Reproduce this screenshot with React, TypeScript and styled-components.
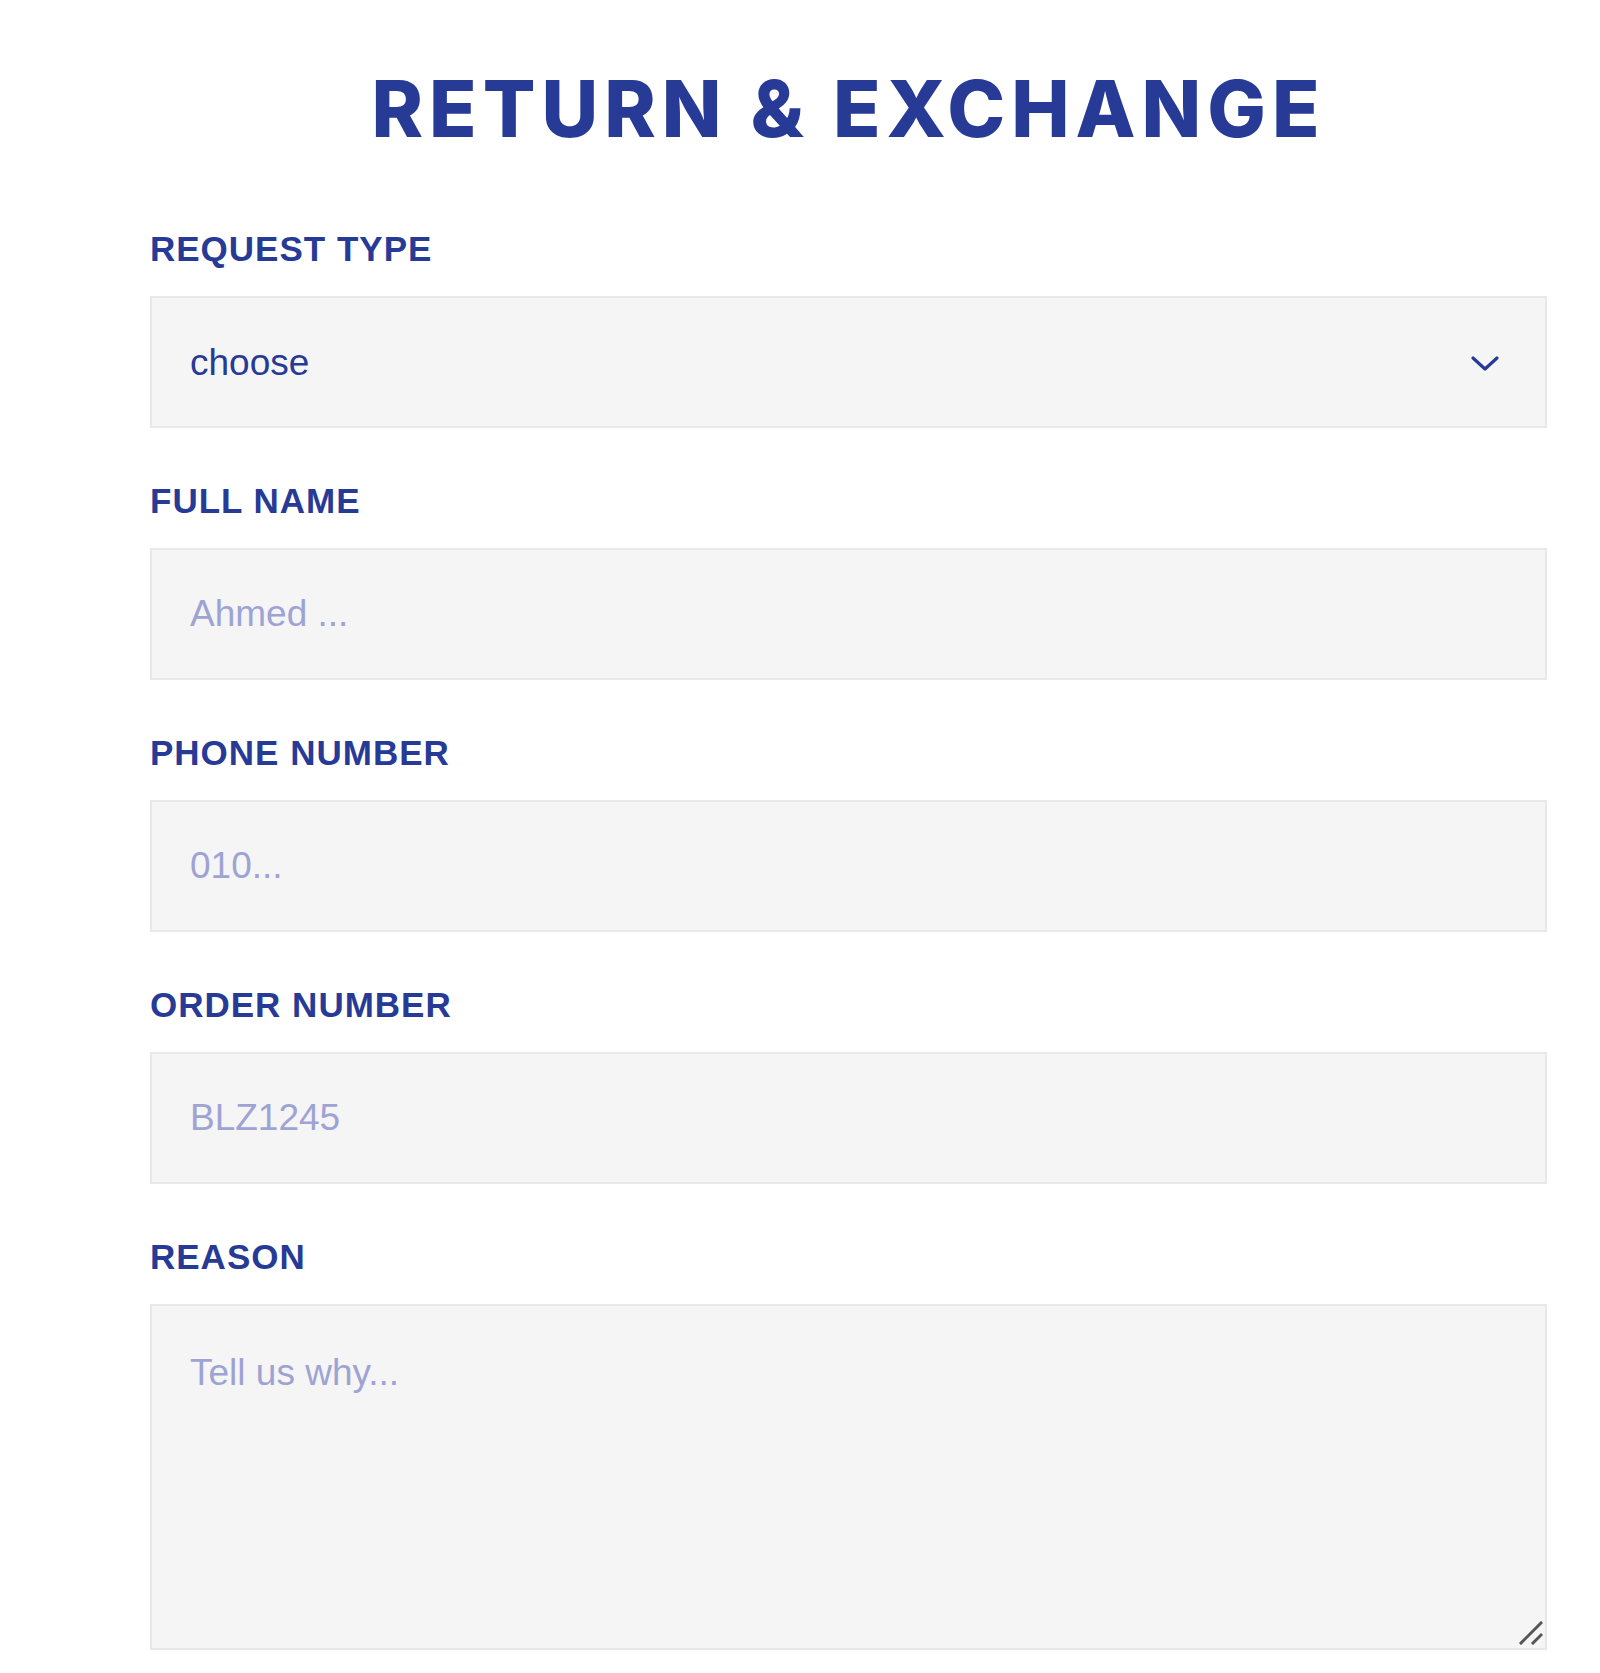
import React from 'react';
import styled, { createGlobalStyle } from 'styled-components';

const GlobalStyle = createGlobalStyle`
  html, body {
    margin: 0;
    padding: 0;
    background: #ffffff;
  }
`;

const Page = styled.main`
  padding: 70px 0 24px 150px;
`;

const Form = styled.form`
  width: 1397px;
  display: flex;
  flex-direction: column;
`;

const Title = styled.h1`
  margin: 0 0 83px;
  text-align: center;
  font-family: Inter, 'DejaVu Sans', sans-serif;
  font-weight: 800;
  font-size: 78px;
  line-height: 1;
  letter-spacing: 6px;
  color: #263a96;
`;

const Field = styled.div`
  display: flex;
  flex-direction: column;
  margin-bottom: 55px;

  &:last-child {
    margin-bottom: 0;
  }
`;

const Label = styled.label`
  display: block;
  margin-bottom: 29px;
  font-family: 'Liberation Sans', Arial, sans-serif;
  font-weight: 700;
  font-size: 35px;
  line-height: 36px;
  letter-spacing: 1px;
  color: #263a96;
`;

const boxStyles = `
  box-sizing: border-box;
  width: 100%;
  margin: 0;
  padding: 0 38px;
  border: 2px solid #e8e8e8;
  border-radius: 0;
  background: #f5f5f5;
  font-family: 'Liberation Sans', Arial, sans-serif;
  font-size: 37px;
  color: #263a96;
  outline: none;

  &::placeholder {
    color: #9ea3d4;
    opacity: 1;
  }
`;

const Input = styled.input`
  ${boxStyles}
  height: 132px;
`;

const BoxWrap = styled.div`
  position: relative;
`;

const Select = styled.select`
  ${boxStyles}
  height: 132px;
  appearance: none;
  -webkit-appearance: none;
  cursor: pointer;
`;

const Chevron = styled.svg`
  position: absolute;
  right: 48px;
  top: 50%;
  width: 28px;
  height: 16px;
  margin-top: -6px;
  pointer-events: none;
`;

const TextArea = styled.textarea`
  ${boxStyles}
  display: block;
  height: 346px;
  padding-top: 46px;
  line-height: 1.15;
  resize: none;
`;

const Grip = styled.svg`
  position: absolute;
  right: 4px;
  bottom: 5px;
  width: 24px;
  height: 24px;
  pointer-events: none;
`;

const App = (): JSX.Element => {
  return (
    <>
      <GlobalStyle />
      <Page>
        <Form onSubmit={(e) => e.preventDefault()}>
          <Title>RETURN &amp; EXCHANGE</Title>

          <Field>
            <Label htmlFor="type">REQUEST TYPE</Label>
            <BoxWrap>
              <Select id="type" defaultValue="">
                <option value="">choose</option>
                <option value="return">Return</option>
                <option value="exchange">Exchange</option>
              </Select>
              <Chevron viewBox="0 0 28 16" fill="none" stroke="#263a96" strokeWidth="3.2" strokeLinecap="round" strokeLinejoin="round">
                <path d="M2 2l12 11L26 2" />
              </Chevron>
            </BoxWrap>
          </Field>

          <Field>
            <Label htmlFor="name">FULL NAME</Label>
            <Input id="name" type="text" placeholder="Ahmed ..." />
          </Field>

          <Field>
            <Label htmlFor="phone">PHONE NUMBER</Label>
            <Input id="phone" type="tel" placeholder="010..." />
          </Field>

          <Field>
            <Label htmlFor="order">ORDER NUMBER</Label>
            <Input id="order" type="text" placeholder="BLZ1245" />
          </Field>

          <Field>
            <Label htmlFor="reason">REASON</Label>
            <BoxWrap>
              <TextArea id="reason" placeholder="Tell us why..." />
              <Grip viewBox="0 0 24 24" fill="none" stroke="#555555" strokeWidth="3" strokeLinecap="square">
                <path d="M2 22L22 2" />
                <path d="M14 22l8-8" />
              </Grip>
            </BoxWrap>
          </Field>
        </Form>
      </Page>
    </>
  );
};

export default App;
